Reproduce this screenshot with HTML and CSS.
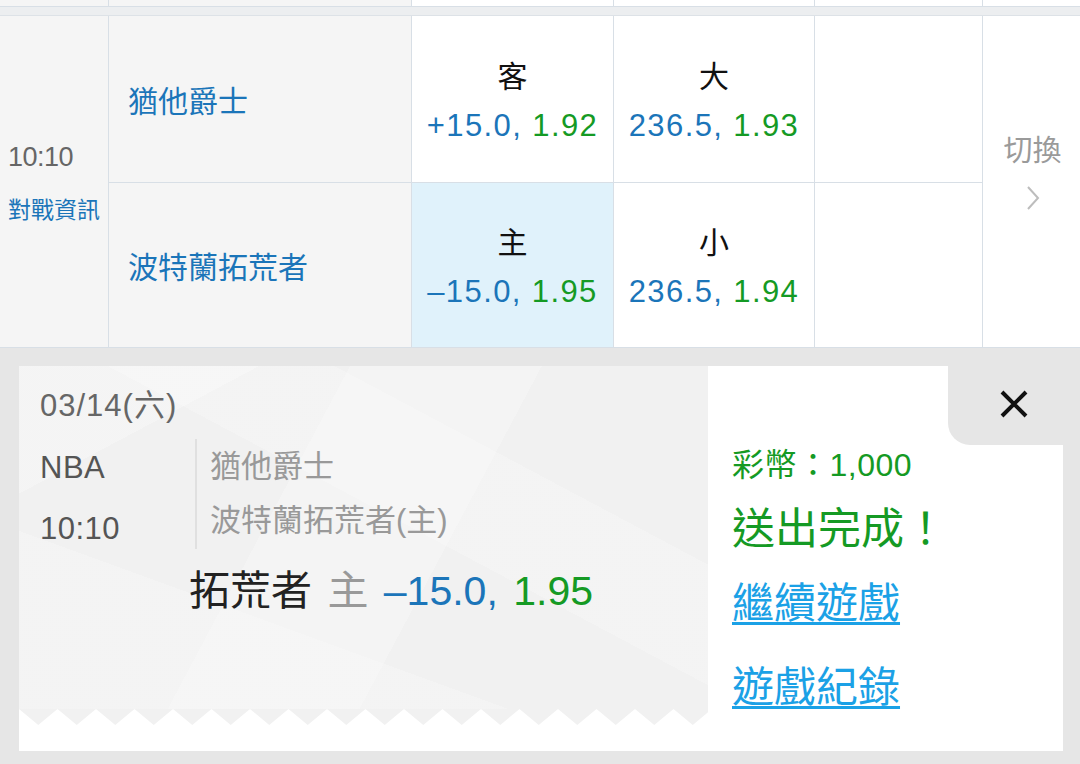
FILE: index.html
```html
<!DOCTYPE html>
<html lang="zh-Hant">
<head>
<meta charset="utf-8">
<title>投注完成</title>
<link rel="stylesheet" href="styles.css">
</head>
<body>
<div class="page">
  <div class="prev-row">
    <div class="pc gray"></div><div class="pc gray"></div><div class="pc"></div><div class="pc"></div><div class="pc"></div><div class="pc"></div>
  </div>
  <div class="band"></div>

  <div class="match">
    <div class="c-time">
      <div class="time">10:10</div>
      <div class="info-link">對戰資訊</div>
    </div>
    <div class="c-team r1">猶他爵士</div>
    <div class="c-odd r1">
      <div class="odd-label">客</div>
      <div class="odd-val"><span class="blue">+15.0,</span> <span class="green">1.92</span></div>
    </div>
    <div class="c-odd r1">
      <div class="odd-label">大</div>
      <div class="odd-val"><span class="blue">236.5,</span> <span class="green">1.93</span></div>
    </div>
    <div class="c-empty r1"></div>
    <div class="c-switch">
      <div class="switch-text">切換</div>
      <svg class="chev" width="14" height="26" viewBox="0 0 14 26"><polyline points="2,2 12,13 2,24" fill="none" stroke="#bdbdbd" stroke-width="2"/></svg>
    </div>
    <div class="c-team r2">波特蘭拓荒者</div>
    <div class="c-odd r2 sel">
      <div class="odd-label">主</div>
      <div class="odd-val"><span class="blue">&ndash;15.0,</span> <span class="green">1.95</span></div>
    </div>
    <div class="c-odd r2">
      <div class="odd-label">小</div>
      <div class="odd-val"><span class="blue">236.5,</span> <span class="green">1.94</span></div>
    </div>
    <div class="c-empty r2"></div>
  </div>

  <div class="overlay">
    <div class="card">
      <div class="ticket">
        <div class="paper">
          <div class="t-date">03/14(六)</div>
          <div class="t-info">
            <div class="t-left">
              <div>NBA</div>
              <div>10:10</div>
            </div>
            <div class="t-names">
              <div>猶他爵士</div>
              <div>波特蘭拓荒者(主)</div>
            </div>
          </div>
          <div class="t-bet"><span class="dark">拓荒者</span> <span class="grey">主</span> <span class="blue">&ndash;15.0,</span> <span class="green">1.95</span></div>
        </div>
        <svg class="zigzag" width="689" height="16" viewBox="0 0 689 16"><polygon fill="#f1f1f1" points="0,0 19.25,16 38.5,0 57.75,16 77,0 96.25,16 115.5,0 134.75,16 154,0 173.25,16 192.5,0 211.75,16 231,0 250.25,16 269.5,0 288.75,16 308,0 327.25,16 346.5,0 365.75,16 385,0 404.25,16 423.5,0 442.75,16 462,0 481.25,16 500.5,0 519.75,16 539,0 558.25,16 577.5,0 596.75,16 616,0 635.25,16 654.5,0 673.75,16 693,0"/></svg>
        <div class="ticket-foot"></div>
      </div>
      <div class="result">
        <div class="close-tab">
          <svg width="30" height="30" viewBox="0 0 30 30"><path d="M3 3 L27 27 M27 3 L3 27" stroke="#111" stroke-width="4" fill="none"/></svg>
        </div>
        <div class="result-body">
          <div class="coins">彩幣：1,000</div>
          <div class="done">送出完成！</div>
          <a class="link l1" href="#">繼續遊戲</a>
          <a class="link l2" href="#">遊戲紀錄</a>
        </div>
      </div>
    </div>
  </div>
</div>
</body>
</html>
```

FILE: styles.css
```css
* { box-sizing: border-box; margin: 0; padding: 0; }
html, body { width: 1080px; height: 764px; overflow: hidden; }
body {
  font-family: "Liberation Sans", "Noto Sans CJK TC", sans-serif;
  background: #e6e6e6;
  color: #222;
}
.page { width: 1080px; height: 764px; display: flex; flex-direction: column; }

.prev-row {
  display: grid;
  grid-template-columns: 108px 302px 201px 200px 167px 97px;
  column-gap: 1px;
  height: 7px;
  background: #d8dfe6;
  border-bottom: 1px solid #d8dfe6;
}
.pc { background: #fff; }
.pc.gray { background: #f5f5f5; }
.band { height: 9px; background: #eceef0; border-bottom: 1px solid #dde2e7; }

.match {
  display: grid;
  grid-template-columns: 108px 302px 201px 200px 167px 97px;
  grid-template-rows: 166px 164px;
  gap: 1px;
  background: #d8dfe6;
  border-bottom: 1px solid #d8dfe6;
}
.c-time {
  grid-row: 1 / 3; grid-column: 1;
  background: #f5f5f5;
  display: flex; flex-direction: column; justify-content: center;
  padding-left: 8px; padding-top: 2px;
}
.time { font-size: 27px; color: #666; line-height: 32px; letter-spacing: -0.5px; }
.info-link { font-size: 23px; color: #1b75b9; line-height: 30px; margin-top: 22px; }

.c-team {
  grid-column: 2;
  background: #f5f5f5;
  display: flex; align-items: center;
  padding-left: 19px;
  font-size: 30px; color: #1b75b9;
}
.c-team.r1 { grid-row: 1; }
.c-team.r2 { grid-row: 2; }

.c-odd {
  background: #fff;
  display: flex; flex-direction: column; align-items: center; justify-content: center;
}
.c-odd.r1 { grid-row: 1; padding-top: 6px; }
.c-odd.r2 { grid-row: 2; padding-top: 6px; }
.c-odd.sel { background: #e0f2fb; }
.odd-label { font-size: 30px; color: #111; line-height: 48px; }
.odd-val { font-size: 31px; line-height: 50px; letter-spacing: 1.4px; white-space: nowrap; }

.c-empty { background: #fff; grid-column: 5; }
.c-empty.r1 { grid-row: 1; }
.c-empty.r2 { grid-row: 2; }

.c-switch {
  grid-row: 1 / 3; grid-column: 6;
  background: #fff;
  display: flex; flex-direction: column; align-items: center; justify-content: center;
  padding-bottom: 22px;
}
.switch-text { font-size: 29px; color: #9a9a9a; line-height: 40px; padding-left: 2px; }
.chev { margin-top: 14px; margin-left: 2px; }

.blue { color: #1b75b9; }
.green { color: #159a24; }
.dark { color: #222; }
.grey { color: #999; }

.overlay { flex: 1; padding: 18px 17px 12px 19px; }
.card { display: flex; height: 385px; }

.ticket { width: 689px; background: #fff; display: flex; flex-direction: column; }
.paper {
  height: 343px;
  background-color: #f1f1f1;
  background-image:
    linear-gradient(152deg, rgba(255,255,255,0.25) 0 18%, transparent 18%),
    linear-gradient(28deg, transparent 0 55%, rgba(255,255,255,0.2) 55% 72%, transparent 72%),
    linear-gradient(118deg, transparent 0 38%, rgba(255,255,255,0.22) 38% 60%, transparent 60%),
    linear-gradient(200deg, transparent 0 70%, rgba(255,255,255,0.2) 70%);
  padding: 20px 0 0 21px;
}
.zigzag { display: block; }
.ticket-foot { flex: 1; background: #fff; }

.t-date { font-size: 31px; line-height: 40px; color: #666; letter-spacing: 1px; }
.t-info { display: flex; margin-top: 13px; height: 110px; }
.t-left { width: 155px; font-size: 31px; line-height: 61px; color: #555; margin-top: -2px; letter-spacing: 0.5px; }
.t-names {
  border-left: 2px solid #e0e0e0;
  padding-left: 13px; padding-top: 1px;
  font-size: 31px; line-height: 54px; color: #999;
}
.t-bet {
  margin-top: 17px; padding-left: 149px;
  font-size: 41px; line-height: 50px; white-space: nowrap;
  letter-spacing: 0; word-spacing: 4px;
}

.result { width: 355px; background: #fff; display: flex; flex-direction: column; }
.close-tab {
  align-self: flex-end;
  width: 115px; height: 79px;
  background: #e6e6e6;
  border-bottom-left-radius: 22px;
  display: flex; align-items: center; justify-content: center;
  padding-left: 16px; padding-bottom: 3px;
}
.result-body { display: flex; flex-direction: column; align-items: flex-start; padding-left: 24px; }
.coins { font-size: 32px; line-height: 36px; color: #159a24; margin-top: 2px; letter-spacing: 0.5px; }
.done { font-size: 43px; line-height: 54px; color: #159a24; margin-top: 19px; }
.link {
  font-size: 42px; line-height: 50px; color: #1ba1e6;
  text-decoration: underline; text-decoration-thickness: 3px; text-underline-offset: 4px;
}
.l1 { margin-top: 23px; }
.l2 { margin-top: 34px; }
```
